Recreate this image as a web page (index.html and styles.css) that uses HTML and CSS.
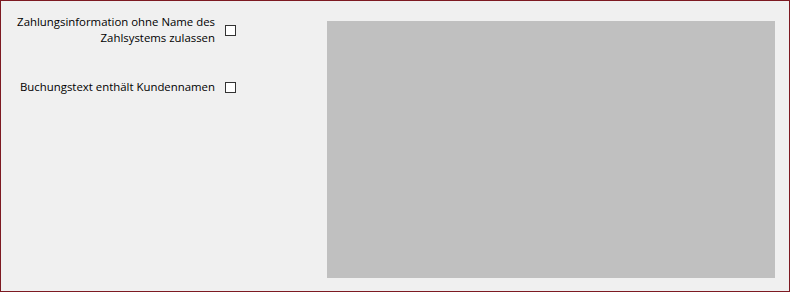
FILE: index.html
```html
<!DOCTYPE html>
<html>
<head>
    <meta http-equiv="Content-Type" content="text/html; charset=utf-8" />
    <title>Zahlungsoptionen</title>
    <link rel="stylesheet" href="styles.css">
</head>
<body>
  <div class="window">
    <div class="fields">
      <div class="field">
        <label for="opt1">Zahlungsinformation ohne Name des<br>Zahlsystems zulassen</label>
        <span class="box" id="opt1"></span>
      </div>
      <div class="field">
        <label for="opt2">Buchungstext enthält Kundennamen</label>
        <span class="box" id="opt2"></span>
      </div>
    </div>
    <div class="preview"></div>
  </div>
</body>
</html>
```

FILE: styles.css
```css
body {
    margin: 0;
    background-color: #f0f0f0;
    font-family: "Open Sans", "Noto Sans", sans-serif;
    font-size: 11.4px;
    color: #000;
}

.window {
    width: 790px;
    height: 292px;
    box-sizing: border-box;
    border: 1px solid #7d1a22;
    background-color: #f0f0f0;
    display: flex;
}

.fields {
    width: 235px;
    padding-top: 13px;
    display: flex;
    flex-direction: column;
    gap: 33px;
}

.field {
    display: flex;
    align-items: center;
    justify-content: flex-end;
    gap: 10px;
}

.field label {
    text-align: right;
    line-height: 16px;
}

.box {
    width: 11px;
    height: 11px;
    box-sizing: border-box;
    border: 1px solid #333;
    background-color: #fff;
    flex-shrink: 0;
}

.preview {
    flex: 1;
    margin: 20px 14px 13px 91px;
    background-color: #c0c0c0;
}
```
